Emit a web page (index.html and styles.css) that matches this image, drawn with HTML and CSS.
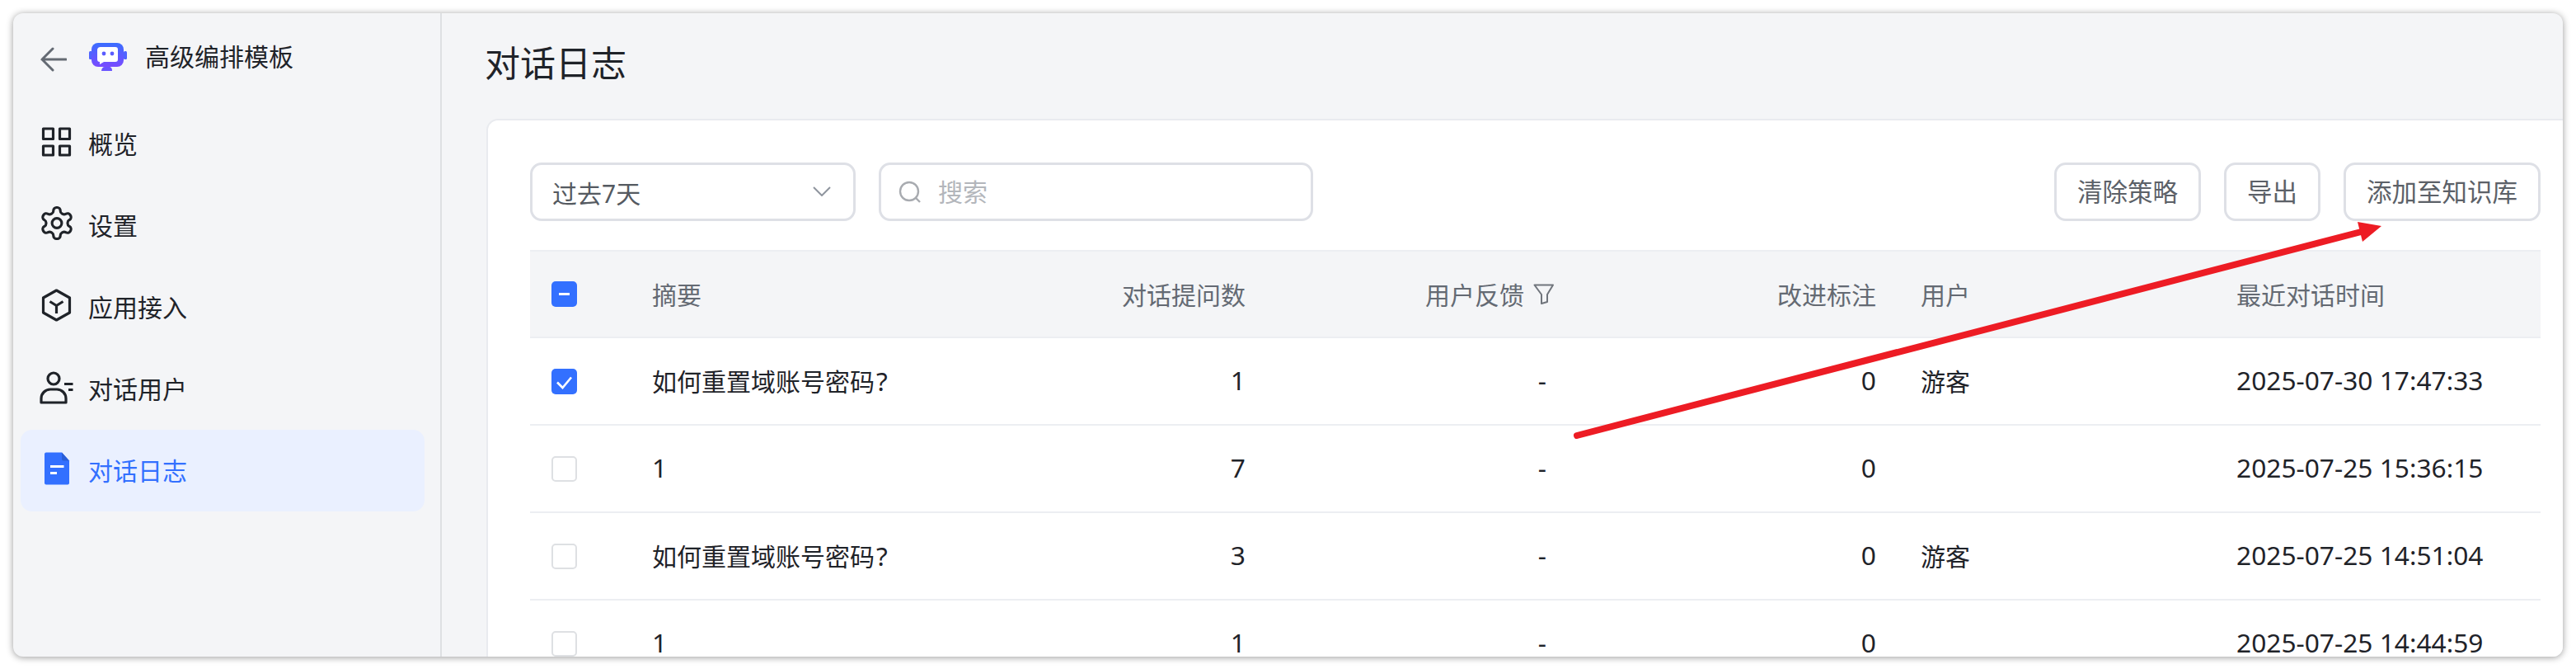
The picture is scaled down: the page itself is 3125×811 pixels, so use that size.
FILE: index.html
```html
<!DOCTYPE html>
<html lang="zh-CN">
<head>
<meta charset="utf-8">
<title>对话日志</title>
<link rel="stylesheet" href="styles.css">
</head>
<body>
<div class="window">
  <aside class="sidebar">
    <div class="app-head">
      <svg class="back" viewBox="0 0 32 36" fill="none"><path d="M15 5 L2 18 L15 31 M2 18 H31"/></svg>
      <svg class="logo" viewBox="108 52 46 34">
        <defs><linearGradient id="lg" x1="0" y1="0" x2="0" y2="1"><stop offset="0" stop-color="#3a6dff"/><stop offset="1" stop-color="#7a4bff"/></linearGradient></defs>
        <rect x="108" y="62" width="4" height="10" rx="1.5" fill="#4f63ff"/>
        <rect x="150" y="62" width="4" height="10" rx="1.5" fill="#4f63ff"/>
        <rect x="111" y="52" width="39" height="29" rx="8" fill="url(#lg)"/>
        <path d="M122 57 H140 a3 3 0 0 1 3 3 V72 a3 3 0 0 1-3 3 H126 L121 78 V75 a3 3 0 0 1-3-3 V60 a4 4 0 0 1 4-3z" fill="#fff"/>
        <circle cx="126" cy="65" r="2.4" fill="#5a5cff"/>
        <circle cx="136" cy="65" r="2.4" fill="#5a5cff"/>
        <path d="M123 86 c0-3 2-5 4-5 h5 c3 0 4 2 4 5z" fill="#6a55ff"/>
      </svg>
      <span class="app-name">高级编排模板</span>
    </div>
    <nav class="nav">
      <a class="nav-item">
        <svg class="ico" viewBox="0 0 40 40"><rect x="3.5" y="1" width="12" height="12.5"/><rect x="23.5" y="1" width="12" height="12.5"/><rect x="3.5" y="22" width="12" height="11"/><rect x="23.5" y="22" width="12" height="11"/></svg>
        <span>概览</span>
      </a>
      <a class="nav-item">
        <svg class="ico" viewBox="0 0 40 40"><g transform="translate(-2.8 -6.3) scale(1.9)" stroke-width="1.65"><path d="M12.22 2h-.44a2 2 0 0 0-2 2v.18a2 2 0 0 1-1 1.73l-.43.25a2 2 0 0 1-2 0l-.15-.08a2 2 0 0 0-2.73.73l-.22.38a2 2 0 0 0 .73 2.73l.15.1a2 2 0 0 1 1 1.72v.51a2 2 0 0 1-1 1.74l-.15.09a2 2 0 0 0-.73 2.73l.22.38a2 2 0 0 0 2.73.73l.15-.08a2 2 0 0 1 2 0l.43.25a2 2 0 0 1 1 1.73V20a2 2 0 0 0 2 2h.44a2 2 0 0 0 2-2v-.18a2 2 0 0 1 1-1.73l.43-.25a2 2 0 0 1 2 0l.15.08a2 2 0 0 0 2.73-.73l.22-.39a2 2 0 0 0-.73-2.73l-.15-.08a2 2 0 0 1-1-1.74v-.5a2 2 0 0 1 1-1.74l.15-.09a2 2 0 0 0 .73-2.73l-.22-.38a2 2 0 0 0-2.73-.73l-.15.08a2 2 0 0 1-2 0l-.43-.25a2 2 0 0 1-1-1.73V4a2 2 0 0 0-2-2z"/><circle cx="12" cy="12" r="3.1"/></g></svg>
        <span>设置</span>
      </a>
      <a class="nav-item">
        <svg class="ico" viewBox="0 0 40 40"><path d="M19.5-1 L35.5 8 V26 L19.5 35 L3.5 26 V8z"/><path d="M11.5 12.5 L19.5 17.5 L27.5 12.5 M19.5 17.5 V27"/></svg>
        <span>应用接入</span>
      </a>
      <a class="nav-item">
        <svg class="ico" viewBox="0 0 40 40"><circle cx="16" cy="7" r="7"/><path d="M1 36 v-5 c0-6 5-11 11-11 h8 c6 0 11 5 11 11 v5z"/><path d="M29 13.5 H39.5 M34 20.5 H39.5"/></svg>
        <span>对话用户</span>
      </a>
      <a class="nav-item active">
        <svg class="ico doc" viewBox="0 0 40 40"><path class="sheet" d="M7-2.5 H26 L35 7.5 V34.5 a2 2 0 0 1-2 2 H7 a2 2 0 0 1-2-2 V-.5 a2 2 0 0 1 2-2z"/><path class="fold" d="M26-2.5 L35 7.5 H28 a2 2 0 0 1-2-2z"/><rect class="ln" x="12" y="13" width="16.5" height="3"/><rect class="ln" x="12" y="21" width="8" height="3"/></svg>
        <span>对话日志</span>
      </a>
    </nav>
  </aside>
  <main class="main">
    <h1 class="page-title">对话日志</h1>
    <section class="card">
      <div class="toolbar">
        <div class="select">
          <span>过去7天</span>
          <svg class="chev" viewBox="0 0 22 12" fill="none"><path d="M1 1 L11 11 L21 1"/></svg>
        </div>
        <div class="search">
          <svg class="mag" viewBox="0 0 28 28" fill="none"><circle cx="13" cy="13" r="11"/><path d="M21 21 L26 26"/></svg>
          <span>搜索</span>
        </div>
        <div class="actions">
          <button class="btn">清除策略</button>
          <button class="btn">导出</button>
          <button class="btn">添加至知识库</button>
        </div>
      </div>
      <table class="logs">
        <colgroup>
          <col class="c1"><col class="c2"><col class="c3"><col class="c4"><col class="c5"><col class="c6"><col class="c7">
        </colgroup>
        <thead>
          <tr>
            <th class="chk"><span class="cb on"><svg viewBox="0 0 31 31"><path d="M9 15.5 H22" stroke="#fff" stroke-width="3"/></svg></span></th>
            <th>摘要</th>
            <th class="r">对话提问数</th>
            <th class="r"><span class="fb">用户反馈<svg class="filter" viewBox="0 0 26 25" fill="none"><path d="M1.5 1.5 H24 L17 13 V22 L10 24 V13z"/></svg></span></th>
            <th class="r">改进标注</th>
            <th class="u">用户</th>
            <th>最近对话时间</th>
          </tr>
        </thead>
        <tbody>
          <tr>
            <td class="chk"><span class="cb on"><svg viewBox="0 0 31 31" fill="none"><path d="M7 16.5 L13.5 23 L24 10.5" stroke="#fff" stroke-width="2.6"/></svg></span></td>
            <td>如何重置域账号密码<span class="q">?</span></td><td class="r n">1</td><td class="r n dash">-</td><td class="r n">0</td><td class="u">游客</td><td class="n">2025-07-30 17:47:33</td>
          </tr>
          <tr>
            <td class="chk"><span class="cb"></span></td>
            <td class="n">1</td><td class="r n">7</td><td class="r n dash">-</td><td class="r n">0</td><td class="u"></td><td class="n">2025-07-25 15:36:15</td>
          </tr>
          <tr>
            <td class="chk"><span class="cb"></span></td>
            <td>如何重置域账号密码<span class="q">?</span></td><td class="r n">3</td><td class="r n dash">-</td><td class="r n">0</td><td class="u">游客</td><td class="n">2025-07-25 14:51:04</td>
          </tr>
          <tr>
            <td class="chk"><span class="cb"></span></td>
            <td class="n">1</td><td class="r n">1</td><td class="r n dash">-</td><td class="r n">0</td><td class="u"></td><td class="n">2025-07-25 14:44:59</td>
          </tr>
        </tbody>
      </table>
    </section>
  </main>
  <svg class="arrow" viewBox="0 0 3125 811">
    <path d="M1913 528 L2872 279" stroke="#ed1c24" stroke-width="8" stroke-linecap="round" fill="none"/>
    <path d="M2889 274 L2860 269 L2866 293z" fill="#ed1c24"/>
  </svg>
</div>
</body>
</html>
```
FILE: styles.css
```css
* { box-sizing: border-box; }
html, body { margin: 0; height: 100%; background: #fff; }
body {
  padding: 16px 16px 15px;
  font-family: "Noto Sans", "Noto Sans CJK SC", sans-serif;
  font-size: 30px;
  color: #1f2329;
  overflow: hidden;
}
.window {
  display: flex;
  height: 780px;
  border-radius: 12px;
  background: #f4f5f7;
  box-shadow: 0 1px 9px rgba(0, 0, 0, .4);
  overflow: hidden;
}
.arrow {
  position: fixed;
  left: 0;
  top: 0;
  width: 3125px;
  height: 811px;
  pointer-events: none;
}

/* sidebar */
.sidebar {
  flex: 0 0 520px;
  border-right: 2px solid #dee0e3;
  padding: 0 19px 0 9px;
}
.app-head {
  display: flex;
  align-items: center;
  height: 109px;
  padding-left: 24px;
}
.back { width: 32px; height: 36px; margin-top: 2px; }
.back path { stroke: #646a73; stroke-width: 3; stroke-linecap: round; }
.logo { width: 46px; height: 34px; margin-left: 27px; margin-bottom: 3px; }
.app-name { margin-left: 22px; margin-bottom: 4px; line-height: 40px; }
.nav { display: flex; flex-direction: column; }
.nav-item {
  display: flex;
  align-items: center;
  gap: 18px;
  height: 99px;
  padding-left: 24px;
  border-radius: 14px;
}
.nav-item span { margin-bottom: 4px; }
.nav-item.active { background: #eaf0ff; color: #3370ff; }
.ico { width: 40px; height: 40px; flex: none; overflow: visible; fill: none; stroke: #1f2329; stroke-width: 3.2; stroke-linejoin: round; }
.doc { stroke: none; }
.doc .sheet { fill: #3370ff; }
.doc .fold { fill: #2a5ed6; }
.doc .ln { fill: #fff; }

/* main */
.main { flex: 1; min-width: 0; padding-left: 54px; }
.page-title {
  margin: 0 0 0 -2px;
  height: 128px;
  padding-top: 30px;
  font-size: 43px;
  font-weight: 400;
  line-height: 62px;
}
.card {
  height: 660px;
  background: #fff;
  border: 2px solid #e9ebef;
  border-width: 2px 0 0 2px;
  border-top-left-radius: 14px;
  padding: 51px 27px 0 51px;
}
.toolbar { display: flex; align-items: center; height: 71px; margin-bottom: 35px; }
.select, .search, .btn {
  height: 71px;
  background: #fff;
  border: 3px solid #dee0e6;
  border-radius: 14px;
}
.select {
  display: flex;
  align-items: center;
  justify-content: space-between;
  width: 395px;
  padding: 0 27px 0 24px;
  color: #555a61;
}
.chev { width: 22px; height: 12px; margin-top: -2px; }
.chev path { stroke: #8f959e; stroke-width: 2; }
.search {
  display: flex;
  align-items: center;
  gap: 20px;
  width: 527px;
  margin-left: 28px;
  padding-left: 21px;
  color: #b3b6bb;
}
.search span { margin-bottom: 3px; }
.mag { width: 28px; height: 28px; flex: none; }
.mag circle, .mag path { stroke: #a8abb0; stroke-width: 2.4; }
.actions { display: flex; gap: 28px; margin-left: auto; }
.btn {
  padding: 0 25px 3px;
  font: inherit;
  font-size: 30.5px;
  color: #5c6168;
}

/* table */
.logs { width: 2439px; table-layout: fixed; border-collapse: separate; border-spacing: 0; }
.c1 { width: 148px; }
.c2 { width: 409px; }
.c3 { width: 311px; }
.c4 { width: 375px; }
.c5 { width: 390px; }
.c6 { width: 437px; }
.c7 { width: 369px; }
.logs th, .logs td { padding: 0; text-align: left; font-weight: 400; white-space: nowrap; }
.logs thead tr { height: 107px; }
.logs tbody tr { height: 106px; }
.logs th {
  background: #f4f5f7;
  color: #646a73;
  border-top: 2px solid #eceef2;
  border-bottom: 2px solid #eceef2;
  padding-bottom: 1px;
}
.logs td { border-bottom: 2px solid #eceef2; padding-bottom: 3px; }
.logs .r { text-align: right; }
.logs .u { padding-left: 54px; }
.logs .chk { padding-left: 26px; padding-bottom: 0; }
.logs .dash { padding-right: 10px; }
.n { font-size: 31.7px; }
.q { margin-left: 2px; font-size: 31.7px; }
.fb { display: inline-flex; align-items: center; gap: 11px; }
.filter { width: 26px; height: 25px; }
.filter path { stroke: #70757c; stroke-width: 2; stroke-linejoin: round; }
.cb {
  display: block;
  width: 31px;
  height: 31px;
  border: 2px solid #dee0e3;
  border-radius: 5px;
  background: #fff;
}
.cb.on { border: 0; background: #3370ff; }
.cb svg { display: block; width: 31px; height: 31px; }
```
